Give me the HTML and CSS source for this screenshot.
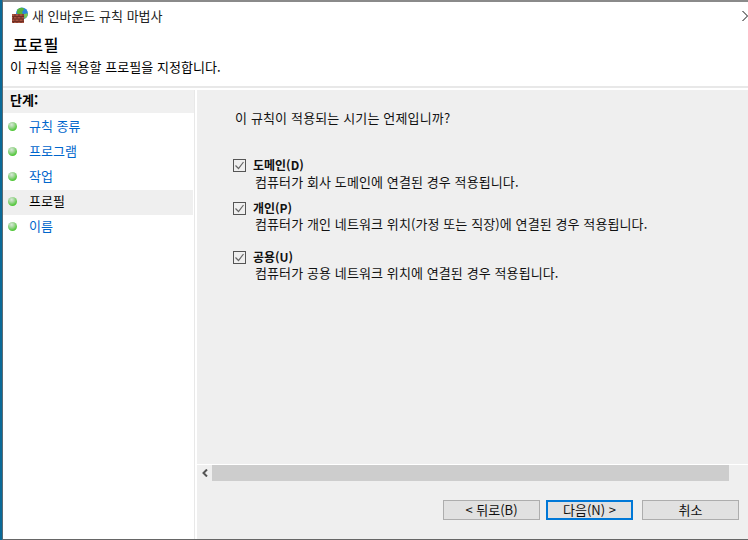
FILE: index.html
```html
<!DOCTYPE html>
<html lang="ko">
<head>
<meta charset="utf-8">
<title>새 인바운드 규칙 마법사</title>
<link rel="stylesheet" href="styles.css">
</head>
<body>
<div class="screen">
  <div class="desktop-edge"></div>
  <div class="window">
    <div class="top-edge"></div>
    <div class="titlebar">
      <svg class="app-icon" width="16" height="16" viewBox="0 0 16 16">
        <circle cx="10" cy="6.500" r="6" fill="#2a86d6"/>
        <path d="M6 2c2-1.500 4.500-1.500 6-.5.500 1.500-2 2.500-2 4 1.500 1 .5 2.500-1 2.500-1.500-.5-3-1-4-2 0-1.500 0-3 1-4z" fill="#58b43a"/>
        <path d="M12 7c1.500-.7 3-.7 4-.2-.2 2-1.500 4.200-3.500 5z" fill="#7cc850"/>
        <rect x="0" y="7" width="12" height="9" fill="#a8523e"/>
        <path d="M0 9.500h12M0 12h12M0 14.500h12M3 7v2.500M7 7v2.500M11 7v2.500M1.500 9.500V12M5 9.500V12M9 9.500V12M3 12v2.500M7 12v2.500M11 12v2.500M1.500 14.500V16M5 14.500V16M9 14.500V16" stroke="#702f24" stroke-width="1" fill="none"/>
      </svg>
      <span class="title-text">새 인바운드 규칙 마법사</span>
      <svg class="close-mark" width="6" height="12" viewBox="0 0 6 12"><path d="M.5 1l5 5-5 5" fill="none" stroke="#111" stroke-width="1"/></svg>
    </div>
    <header class="header">
      <h1 class="page-title">프로필</h1>
      <p class="page-desc">이 규칙을 적용할 프로필을 지정합니다.</p>
    </header>
    <div class="main">
      <aside class="sidebar">
        <div class="sidebar-inner">
          <div class="steps-title">단계:</div>
          <ul class="steps">
            <li class="step"><span class="dot"></span><span class="step-link">규칙 종류</span></li>
            <li class="step"><span class="dot"></span><span class="step-link">프로그램</span></li>
            <li class="step"><span class="dot"></span><span class="step-link">작업</span></li>
            <li class="step current"><span class="dot"></span><span class="step-text">프로필</span></li>
            <li class="step"><span class="dot"></span><span class="step-link">이름</span></li>
          </ul>
        </div>
      </aside>
      <main class="content">
        <div class="content-body">
          <p class="question">이 규칙이 적용되는 시기는 언제입니까?</p>
          <div class="option opt-domain">
            <span class="check"><svg width="13" height="13" viewBox="0 0 13 13"><path d="M2.500 6.500l3 3 5-6.500" fill="none" stroke="#666" stroke-width="1.200"/></svg></span>
            <div class="option-text"><div class="option-name">도메인(D)</div><div class="option-desc">컴퓨터가 회사 도메인에 연결된 경우 적용됩니다.</div></div>
          </div>
          <div class="option opt-private">
            <span class="check"><svg width="13" height="13" viewBox="0 0 13 13"><path d="M2.500 6.500l3 3 5-6.500" fill="none" stroke="#666" stroke-width="1.200"/></svg></span>
            <div class="option-text"><div class="option-name">개인(P)</div><div class="option-desc">컴퓨터가 개인 네트워크 위치(가정 또는 직장)에 연결된 경우 적용됩니다.</div></div>
          </div>
          <div class="option opt-public">
            <span class="check"><svg width="13" height="13" viewBox="0 0 13 13"><path d="M2.500 6.500l3 3 5-6.500" fill="none" stroke="#666" stroke-width="1.200"/></svg></span>
            <div class="option-text"><div class="option-name">공용(U)</div><div class="option-desc">컴퓨터가 공용 네트워크 위치에 연결된 경우 적용됩니다.</div></div>
          </div>
        </div>
        <div class="hscroll">
          <span class="scroll-arrow"><svg width="8" height="8" viewBox="0 0 8 8"><path d="M6 .5L2.500 4 6 7.500" fill="none" stroke="#555" stroke-width="2"/></svg></span>
          <span class="scroll-thumb"></span>
          <span class="scroll-end"></span>
        </div>
        <div class="buttons">
          <button class="btn btn-back">&lt; 뒤로(B)</button>
          <button class="btn btn-next">다음(N) &gt;</button>
          <button class="btn btn-cancel">취소</button>
        </div>
      </main>
    </div>
    <div class="bottom-edge"></div>
  </div>
</div>
</body>
</html>
```
FILE: styles.css
```css
* { box-sizing: border-box; }
html, body { margin: 0; padding: 0; }
body {
  width: 748px;
  height: 540px;
  overflow: hidden;
  font-family: "Noto Sans CJK KR", "Noto Sans", sans-serif;
  font-size: 13px;
  color: #000;
  background: #fff;
}
.screen { width: 748px; height: 540px; display: flex; }
.desktop-edge { width: 2px; flex: none; background: #0a6a98; }
.window {
  flex: 1;
  min-width: 0;
  display: flex;
  flex-direction: column;
  border-left: 1px solid #5a6a72;
}
.top-edge { height: 2px; background: #8a8a8a; flex: none; }
.bottom-edge { height: 1px; background: #666; flex: none; }
.titlebar {
  height: 27px;
  flex: none;
  display: flex;
  align-items: center;
  padding-left: 9px;
  background: #fff;
}
.app-icon { flex: none; margin-top: -2px; }
.title-text { margin: -1px 0 0 4px; font-size: 13px; color: #222; }
.close-mark { margin-left: auto; }
.header { height: 59px; flex: none; padding: 5px 0 0 10px; border-bottom: 2px solid #e8e8e8; background: #fff; }
.page-title { margin: 0; font-size: 16px; line-height: 20px; font-weight: 500; letter-spacing: .6px; }
.page-desc { margin: 4px 0 0 -3px; font-size: 13px; line-height: 18px; letter-spacing: .06px; }
.main { flex: 1; display: flex; min-height: 0; padding-top: 2px; background: #fff; }
.sidebar {
  width: 194px;
  flex: none;
  padding-right: 2px;
  background: #fff;
}
.sidebar-inner { height: 100%; border-right: 1px solid #e8e8e8; }
.steps-title {
  height: 23px;
  background: #f0f0f0;
  padding-left: 7px;
  font-weight: 700;
  font-size: 13px;
  line-height: 20px;
}
.steps { list-style: none; margin: 2px 0 0; padding: 0; }
.step {
  height: 25px;
  display: flex;
  align-items: center;
  padding: 0 0 3px 5px;
  font-size: 13px;
}
.step.current { background: #efefef; margin-right: 1px; }
.dot {
  width: 9px;
  height: 9px;
  border-radius: 50%;
  flex: none;
  background: radial-gradient(circle at 40% 30%, #d8e8d8 0, #a8d8a0 30%, #52c83a 70%, #48b030 100%);
}
.step-link, .step-text { margin: 0 0 2px 12px; }
.step-link { color: #0066cc; }
.step-text { color: #000; }
.content {
  flex: 1;
  display: flex;
  flex-direction: column;
  background: #efefef;
  min-width: 0;
}
.content-body { flex: 1; padding: 19px 0 0 38px; min-height: 0; }
.question { margin: 0; font-size: 13px; line-height: 18px; letter-spacing: .15px; color: #111; }
.option { display: flex; align-items: flex-start; }
.opt-domain { margin-top: 30px; }
.opt-private { margin-top: 9px; }
.opt-public { margin-top: 16px; }
.check {
  width: 13px;
  height: 13px;
  flex: none;
  margin: 2px 7px 0 -2px;
  border: 1px solid #555;
  display: block;
}
.check svg { display: block; margin: -1px; }
.option-name { font-size: 12px; line-height: 16px; font-weight: 700; color: #111; }
.opt-private .option-name, .opt-public .option-name { line-height: 15px; }
.option-desc { font-size: 13px; line-height: 18px; letter-spacing: .1px; margin-left: 2px; color: #111; }
.hscroll {
  height: 17px;
  flex: none;
  display: flex;
  border-top: 1px solid #fff;
}
.scroll-arrow { width: 15px; display: flex; align-items: center; justify-content: center; flex: none; }
.scroll-thumb { flex: 1; background: #cdcdcd; }
.scroll-end { width: 19px; flex: none; }
.buttons {
  height: 58px;
  flex: none;
  padding: 19px 9px 0 0;
  display: flex;
  justify-content: flex-end;
  align-items: flex-start;
}
.btn {
  width: 97px;
  height: 20px;
  padding: 0;
  border: 1px solid #adadad;
  background: #e1e1e1;
  font-family: inherit;
  font-size: 13px;
  line-height: 16px;
  color: #111;
}
.btn-next { width: 87px; margin: 0 9px 0 6px; border: 2px solid #0078d7; }
```
